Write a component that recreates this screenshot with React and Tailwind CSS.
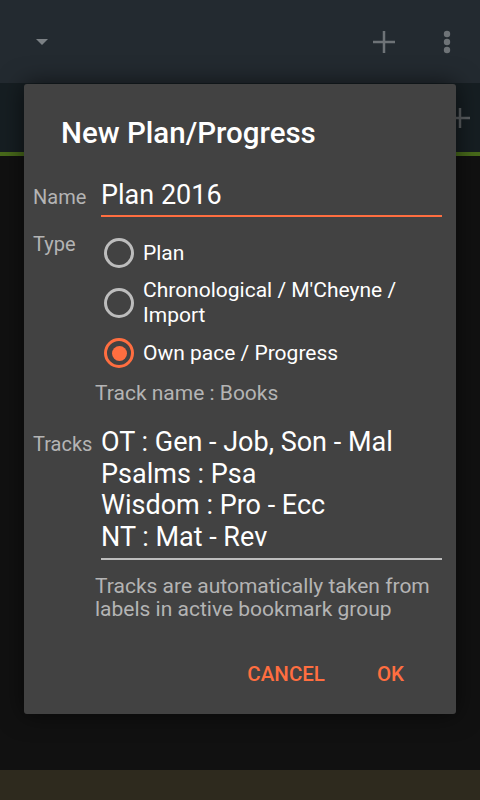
import { useState } from 'react';

function Radio({ checked }) {
    return (
        <div className={`w-[30px] h-[30px] rounded-full border-[3px] flex items-center justify-center shrink-0 ${checked ? 'border-[#ff6e40]' : 'border-[#bdbdbd]'}`}>
            {checked && <div className="w-[15px] h-[15px] rounded-full bg-[#ff6e40]" />}
        </div>
    );
}

export default function App() {
    const [type, setType] = useState('own');
    const options = [
        { id: 'plan', label: 'Plan' },
        { id: 'chrono', label: "Chronological / M'Cheyne / Import" },
        { id: 'own', label: 'Own pace / Progress' },
    ];

    return (
        <div className="relative w-[480px] h-[800px] flex flex-col bg-[#111111] overflow-hidden" style={{ fontFamily: 'Roboto, "Noto Sans", sans-serif' }}>
            {/* Top app bar */}
            <div className="h-[83px] bg-[#232a30] flex items-center pl-[35px] pr-[29px]">
                <svg width="14" height="8" viewBox="0 0 14 8"><path d="M1 1h12l-6 6z" fill="#7c8185" /></svg>
                <div className="flex-1" />
                <svg width="22" height="22" viewBox="0 0 22 22" className="mr-[48px]"><path d="M11 0v22M0 11h22" stroke="#6e7377" strokeWidth="2.5" /></svg>
                <svg width="8" height="24" viewBox="0 0 8 24"><circle cx="4" cy="4" r="3.2" fill="#6e7377" /><circle cx="4" cy="12" r="3.2" fill="#6e7377" /><circle cx="4" cy="20" r="3.2" fill="#6e7377" /></svg>
            </div>
            {/* Second bar */}
            <div className="h-[73px] bg-[#161e22] border-b-[4px] border-[#486a1a] flex items-center justify-end pr-[9px]">
                <svg width="22" height="22" viewBox="0 0 22 22"><path d="M11 1v20M1 11h20" stroke="#5a5e61" strokeWidth="2.5" /></svg>
            </div>
            <div className="flex-1" />
            <div className="h-[30px] bg-[#2e2a1e]" />

            {/* Dialog */}
            <div className="absolute left-[24px] top-[84px] w-[432px] h-[630px] bg-[#424242] rounded-[3px] shadow-[0_0_24px_rgba(0,0,0,0.6)] pt-[31px] pr-[14px] pl-[9px]">
                <h2 className="pl-[28px] text-[29.5px] leading-[36px] font-medium text-white">New Plan/Progress</h2>

                <div className="mt-[27px] grid grid-cols-[68px_1fr]">
                    <div className="text-[20px] leading-[24px] text-[#b4b4b4] pt-[7px]">Name</div>
                    <div className="border-b-2 border-[#ff6e40] text-[27px] leading-[34px] text-white pb-[3px]">Plan 2016</div>

                    <div className="text-[20px] leading-[24px] text-[#b4b4b4] pt-[15px]">Type</div>
                    <div className="pt-[21px] pl-[3px] flex flex-col gap-[10px]">
                        {options.map(o => (
                            <div key={o.id} className="flex items-center gap-[9px] cursor-pointer" onClick={() => setType(o.id)}>
                                <Radio checked={type === o.id} />
                                <span className="text-[21px] leading-[25px] text-white pr-[30px]">{o.label}</span>
                            </div>
                        ))}
                    </div>
                </div>

                <div className="pl-[62px] mt-[12px] text-[21px] leading-[26px] text-[#b4b4b4]">Track name : Books</div>

                <div className="mt-[21px] grid grid-cols-[68px_1fr]">
                    <div className="text-[20px] leading-[24px] text-[#b4b4b4] pt-[5px]">Tracks</div>
                    <div className="border-b-2 border-[#bdbdbd] text-[27px] leading-[31.7px] text-white pb-[4px]">
                        <div>OT : Gen - Job, Son - Mal</div>
                        <div>Psalms : Psa</div>
                        <div>Wisdom : Pro - Ecc</div>
                        <div>NT : Mat - Rev</div>
                    </div>
                </div>

                <div className="pl-[62px] mt-[15px] text-[21px] leading-[23px] text-[#b4b4b4]">
                    Tracks are automatically taken from labels in active bookmark group
                </div>

                <div className="mt-[41px] flex justify-end items-center gap-[52px] pr-[38px]">
                    <button className="text-[20.5px] leading-[24px] font-medium text-[#ff6e40]">CANCEL</button>
                    <button className="text-[20.5px] leading-[24px] font-medium text-[#ff6e40]">OK</button>
                </div>
            </div>
        </div>
    );
}
